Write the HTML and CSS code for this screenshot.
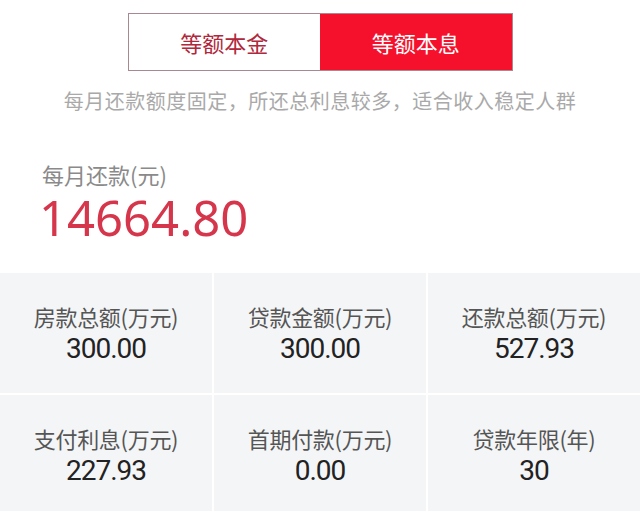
FILE: index.html
```html
<!DOCTYPE html>
<html lang="zh">

<head>
    <meta charset="utf-8">
    <meta name="viewport" content="width=device-width, initial-scale=1.0">
    <title>房贷计算</title>
    <link rel="stylesheet" href="styles.css">
</head>

<body>
    <header>
        <nav class="tabs">
            <button class="tab">等额本金</button>
            <button class="tab valgt">等额本息</button>
        </nav>
        <p class="tip">每月还款额度固定，所还总利息较多，适合收入稳定人群</p>
    </header>

    <section class="monthly">
        <p class="monthly-label">每月还款(元)</p>
        <p class="monthly-value">14664.80</p>
    </section>

    <main class="grid">
        <div class="cell">
            <p class="label">房款总额(万元)</p>
            <p class="value">300.00</p>
        </div>
        <div class="cell">
            <p class="label">贷款金额(万元)</p>
            <p class="value">300.00</p>
        </div>
        <div class="cell">
            <p class="label">还款总额(万元)</p>
            <p class="value">527.93</p>
        </div>
        <div class="cell">
            <p class="label">支付利息(万元)</p>
            <p class="value">227.93</p>
        </div>
        <div class="cell">
            <p class="label">首期付款(万元)</p>
            <p class="value">0.00</p>
        </div>
        <div class="cell">
            <p class="label">贷款年限(年)</p>
            <p class="value">30</p>
        </div>
    </main>
</body>

</html>
```

FILE: styles.css
```css
* {
    box-sizing: border-box;
}

body {
    margin: 0;
    background-color: #ffffff;
    font-family: "Noto Sans", "Noto Sans CJK SC", sans-serif;
    overflow: hidden;
    height: 511px;
}

p {
    margin: 0;
}

header {
    padding-top: 13px;
}

.tabs {
    display: flex;
    width: 385px;
    height: 58px;
    margin: 0 auto;
    border: 1px solid #a98890;
}

.tab {
    flex: 1;
    border: none;
    outline: none;
    background-color: #ffffff;
    color: #b0283c;
    font-family: "Noto Sans CJK SC", sans-serif;
    font-size: 22px;
    padding: 0;
}

.valgt {
    background-color: #f5112b;
    color: #ffffff;
}

.tip {
    text-align: center;
    color: #a9a9a9;
    font-family: "Noto Sans CJK SC", sans-serif;
    font-size: 20px;
    letter-spacing: 0.5px;
    line-height: 28px;
    margin-top: 16px;
}

.monthly {
    padding: 44px 0 0 42px;
    margin-bottom: 32px;
}

.monthly-label {
    color: #8a8a8a;
    font-family: "Noto Sans CJK SC", sans-serif;
    font-size: 22px;
    line-height: 30px;
}

.monthly-value {
    color: #d5364b;
    font-family: "Noto Sans", sans-serif;
    font-size: 49px;
    line-height: 48px;
    margin-top: 4px;
    margin-left: -3px;
}

.grid {
    display: grid;
    grid-template-columns: repeat(3, 1fr);
    grid-auto-rows: 120px;
    gap: 2px;
}

.cell {
    background-color: #f4f5f7;
    text-align: center;
    padding-top: 30px;
}

.label {
    color: #555555;
    font-family: "Noto Sans CJK SC", sans-serif;
    font-size: 22px;
    line-height: 26px;
    letter-spacing: -0.3px;
}

.value {
    color: #222222;
    font-family: "Roboto", sans-serif;
    font-size: 28px;
    line-height: 34px;
    letter-spacing: -1px;
    margin-top: 3px;
}
```
